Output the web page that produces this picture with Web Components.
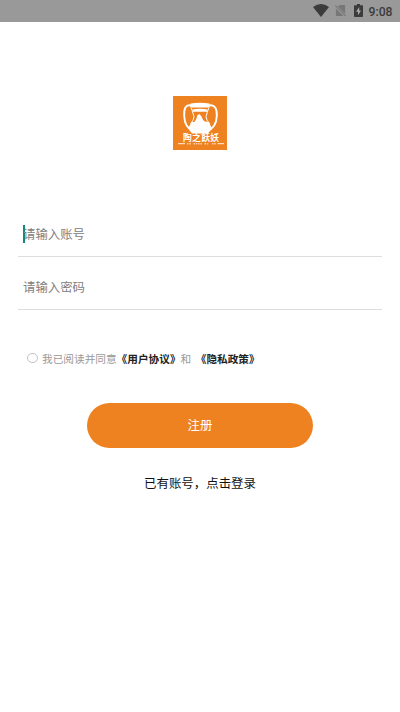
<!DOCTYPE html>
<html lang="zh-CN"><head><meta charset="utf-8"><title>注册</title>
<style>
html,body{margin:0;height:100%;background:#fff;overflow:hidden}
body{font-family:Roboto,"Noto Sans CJK SC",sans-serif}
</style></head><body>
<register-page></register-page>
<script>
const define=(name,html)=>{
  const t=document.createElement('template');t.innerHTML=html;
  customElements.define(name,class extends HTMLElement{
    constructor(){super();this.attachShadow({mode:'open'}).append(t.content.cloneNode(true));}
  });
};
define('status-bar',`<style>
:host{display:flex;box-sizing:border-box;height:21.5px;background:#999;align-items:center;justify-content:flex-end;padding-right:7.5px;color:#3b3b3b}
svg{display:block}.wifi{margin-right:6px}.sim{margin-right:8px}.bat{margin-right:6px}
span{font:500 12.2px/22px Roboto,sans-serif;padding-top:1px;height:21px}
</style>
<svg class="wifi" width="16" height="13" viewBox="0 0 16 13"><path fill="#3b3b3b" d="M0 3Q8-3 16 3L8 13Z"/></svg>
<svg class="sim" width="11" height="13" viewBox="0 0 12 13"><path fill="#777" d="M5 .5H11V10L3.3 2.2ZM1 4.3L9.2 12.5H1Z"/><path stroke="#777" stroke-width="1.2" d="M.4 1L11.6 12.4"/></svg>
<svg class="bat" width="9" height="13" viewBox="0 0 9 13"><path fill="#3b3b3b" d="M3 0H6V1.3H8.3Q9 1.3 9 2V12.2Q9 13 8.2 13H.8Q0 13 0 12.2V2Q0 1.3.7 1.3H3Z"/><path fill="#aaa" d="M5.2 3L2 7.7H4V11.2L7 6.4H5.2Z"/></svg>
<span>9:08</span>`);
define('brand-logo',`<style>:host{display:block;width:54px;height:54px}svg{display:block}text{font-family:"Noto Sans CJK SC",sans-serif;fill:#fff}</style>
<svg width="54" height="54" viewBox="0 0 54 54"><rect width="54" height="54" fill="#ef8220"/>
<path fill="#fff" d="M17.5 7.4Q27 6 36.5 7.4L36.8 11.6H17.2ZM19.5 13.4Q27 12.3 34.5 13.4L34 15.8H20Z"/>
<path fill="none" stroke="#fff" stroke-width="1.9" d="M18 9.5C12.5 8 10.8 13 11.2 20C11.5 28 14.5 33 20.5 35M36 9.5C41.8 8 44.2 13 43.8 20C43.5 28 40 33 34 35"/>
<path fill="none" stroke="#fff" stroke-width="1" d="M18.3 12L21 20.5Q21 24 17.5 28M35.7 12L33 20.5Q33 24 37 28"/>
<path fill="#fff" d="M24.5 19L26.5 18L28.5 20.5L30 24L32 25.5L35.5 26L38 30.5L37.7 34L35 37.5H19L16.3 34L16 30.5L19 26L21.5 26L23.3 23Z"/>
<g font-size="8.8" font-weight="700"><text x="10" y="44.7" textLength="36" lengthAdjust="spacing">陶之飫妖</text></g>
<path stroke="#fff" stroke-opacity=".85" stroke-width="1" d="M5 47.7H12M44.5 47.7H51"/>
<path stroke="#fff" stroke-opacity=".6" stroke-width="1.4" stroke-dasharray="1.5 .8" d="M14 47.7H18M20.5 47.7H29.5M31.5 47.7H36M39 47.7H43"/>
</svg>`);
define('text-field',`<style>
:host{display:flex;box-sizing:border-box;margin:0 18px;padding:2px 0 1px 5px;border-bottom:1px solid #dcdee0;color:#808080;font-size:12.4px;align-items:center}
::slotted(i){width:1.5px;height:18px;background:#168b7c;margin-right:-1.5px}
</style><slot name="caret"></slot><slot></slot>`);
define('agreement-row',`<style>
:host{display:flex;align-items:center;height:20px;padding-left:27px;font-size:10.67px;color:#999;white-space:nowrap}
.radio{box-sizing:border-box;width:10.5px;height:10.5px;border:1px solid #c4c4c4;border-radius:50%;margin-right:4.5px}
::slotted(b){color:#222;font-weight:700}
</style><span class="radio"></span><slot></slot>`);
define('pill-button',`<style>
:host{display:flex;align-items:center;justify-content:center;width:226px;height:44.4px;border-radius:23px;background:#ef8220;color:#fff;font-size:12.4px}
</style><slot></slot>`);
define('register-page',`<style>
:host{display:flex;flex-direction:column;height:100vh}
brand-logo{align-self:center;margin-top:74.5px}
.account{height:46px;margin-top:61px}
.password{height:53px}
.password span{padding-top:6px}
agreement-row{margin-top:38px}
.gap{margin-left:4.5px}
pill-button{align-self:center;margin-top:35.2px}
.login{align-self:center;margin-top:27.4px;font-size:12.44px;line-height:18px;color:#111}
</style>
<status-bar></status-bar><brand-logo></brand-logo>
<text-field class="account"><i slot="caret"></i>请输入账号</text-field>
<text-field class="password"><span>请输入密码</span></text-field>
<agreement-row>我已阅读并同意<b>《用户协议》</b>和<b class="gap">《隐私政策》</b></agreement-row>
<pill-button>注册</pill-button>
<div class="login">已有账号，点击登录</div>`);
</script></body></html>
